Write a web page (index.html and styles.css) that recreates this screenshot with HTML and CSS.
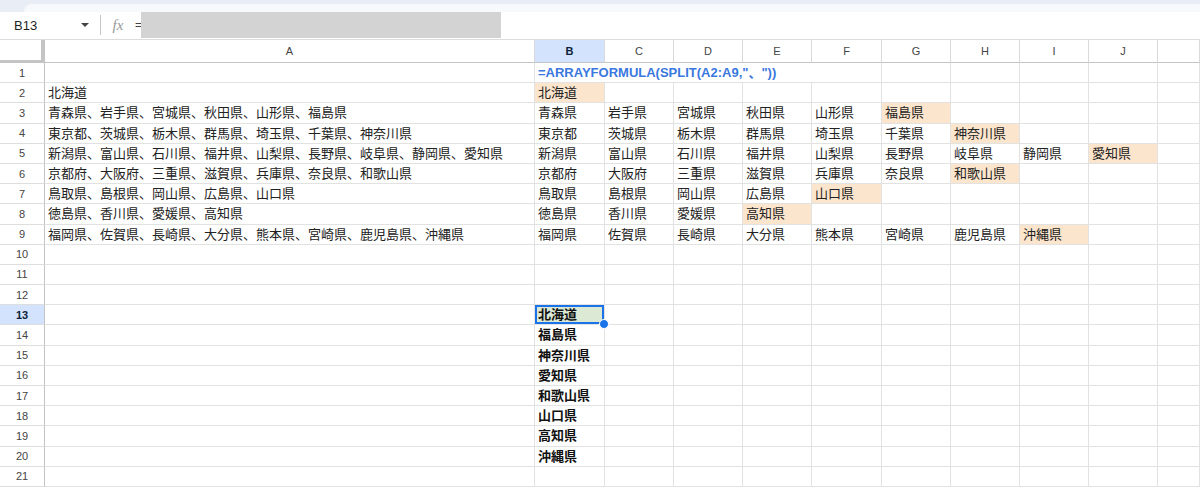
FILE: index.html
```html
<!DOCTYPE html>
<html lang="ja">
<head>
  <meta charset="UTF-8" />
  <meta name="viewport" content="width=device-width, initial-scale=1.0"/>
  <title>都道府県 SPLIT</title>
  <link rel="stylesheet" href="styles.css">
</head>
<body>
  <div class="topstrip"><div class="topstrip-inner"></div></div>

  <section class="formula-bar">
    <div class="name-box">
      <span class="cell-ref">B13</span>
      <svg class="caret" width="10" height="6" viewBox="0 0 10 6"><path d="M1 1 L5 5 L9 1 Z" fill="#444"/></svg>
    </div>
    <div class="divider"></div>
    <span class="fx">fx</span>
    <span class="eq">=</span>
    <div class="formula-input"></div>
  </section>

  <div class="sheet" id="sheet"></div>

  <script>
    const cols = ['A', 'B', 'C', 'D', 'E', 'F', 'G', 'H', 'I', 'J', ''];
    const source = [
      '',
      '北海道',
      '青森県、岩手県、宮城県、秋田県、山形県、福島県',
      '東京都、茨城県、栃木県、群馬県、埼玉県、千葉県、神奈川県',
      '新潟県、富山県、石川県、福井県、山梨県、長野県、岐阜県、静岡県、愛知県',
      '京都府、大阪府、三重県、滋賀県、兵庫県、奈良県、和歌山県',
      '鳥取県、島根県、岡山県、広島県、山口県',
      '徳島県、香川県、愛媛県、高知県',
      '福岡県、佐賀県、長崎県、大分県、熊本県、宮崎県、鹿児島県、沖縄県'
    ];
    const lastOnes = ['北海道', '福島県', '神奈川県', '愛知県', '和歌山県', '山口県', '高知県', '沖縄県'];

    const sheet = document.getElementById('sheet');

    function cell(cls, text) {
      const div = document.createElement('div');
      div.className = cls;
      if (text) div.textContent = text;
      sheet.appendChild(div);
      return div;
    }

    // column headers
    cell('corner');
    cols.forEach(c => cell(c === 'B' ? 'col-head active' : 'col-head', c));

    for (let r = 1; r <= 21; r++) {
      cell(r === 13 ? 'row-head active' : 'row-head', r);
      const text = source[r - 1] || '';
      cell('cell', text);

      if (r === 1) {
        const f = cell('cell formula', '=ARRAYFORMULA(SPLIT(A2:A9,"、"))');
        f.style.gridColumn = 'span 4';
        for (let i = 0; i < 6; i++) cell('cell');
        continue;
      }

      const parts = text ? text.split('、') : [];
      for (let c = 1; c < cols.length; c++) {
        let value = parts[c - 1] || '';
        let cls = 'cell';
        if (parts.length && c === parts.length) cls += ' hl';
        if (c === 1 && r >= 13 && r <= 20) {
          value = lastOnes[r - 13];
          cls += ' bold';
          if (r === 13) cls += ' selected';
        }
        cell(cls, value);
      }
    }
  </script>
</body>
</html>
```

FILE: styles.css
```css
* {
  margin: 0;
  padding: 0;
  box-sizing: border-box;
}

body {
  font-family: 'Liberation Sans', 'Noto Sans CJK JP', sans-serif;
  background: #fff;
  color: #222;
  width: 1200px;
  height: 488px;
  overflow: hidden;
}

.topstrip {
  height: 12px;
  background: #e9eef6;
  padding-top: 4px;
}

.topstrip-inner {
  height: 8px;
  margin-left: 24px;
  background: #f7f9fc;
  border-top-left-radius: 8px;
}

.formula-bar {
  height: 28px;
  display: flex;
  align-items: flex-start;
  border-bottom: 1px solid #dadce0;
}

.name-box {
  width: 100px;
  height: 26px;
  display: flex;
  align-items: center;
  justify-content: space-between;
  padding: 0 10px 0 14px;
  font-size: 13px;
  color: #1f1f1f;
}

.divider {
  width: 1px;
  height: 20px;
  margin-top: 3px;
  background: #c7c7c7;
}

.fx {
  width: 34px;
  height: 26px;
  line-height: 26px;
  text-align: center;
  font-family: 'Liberation Serif', serif;
  font-style: italic;
  font-size: 15px;
  color: #999;
}

.eq {
  height: 26px;
  line-height: 26px;
  font-size: 12px;
  color: #444;
  width: 6px;
}

.formula-input {
  width: 360px;
  height: 26px;
  background: #d3d3d3;
}

.sheet {
  display: grid;
  grid-template-columns: 45px 490px 70px 69px 69px 69px 70px 69px 69px 69px 69px 42px;
  grid-template-rows: 23px repeat(21, 20.2px);
}

.corner {
  border-right: 4px solid #c4c4c4;
  border-bottom: 3px solid #c4c4c4;
}

.col-head {
  display: flex;
  align-items: center;
  justify-content: center;
  font-size: 11px;
  color: #444;
  border-right: 1px solid #d9d9d9;
  border-bottom: 1px solid #c4c4c4;
}

.row-head {
  display: flex;
  align-items: center;
  justify-content: center;
  font-size: 11px;
  color: #444;
  border-right: 1px solid #c4c4c4;
  border-bottom: 1px solid #dedede;
}

.col-head.active,
.row-head.active {
  background: #d3e3fd;
  color: #0b1d3a;
  font-weight: bold;
}

.cell {
  font-size: 13px;
  line-height: 19px;
  padding-left: 3px;
  white-space: nowrap;
  overflow: visible;
  color: #222;
  border-right: 1px solid #e2e2e2;
  border-bottom: 1px solid #e2e2e2;
}

.cell.formula {
  color: #3a78e0;
  font-weight: bold;
  border-right: none;
}

.cell.hl {
  background: #fce5cd;
}

.cell.bold {
  font-weight: bold;
  color: #111;
}

.cell.selected {
  position: relative;
  background: #dbe9d5;
  box-shadow: inset 0 0 0 2px #1a73e8;
  z-index: 2;
}

.cell.selected::after {
  content: '';
  position: absolute;
  right: -5px;
  bottom: -5px;
  width: 8px;
  height: 8px;
  border-radius: 50%;
  background: #1a73e8;
  border: 1px solid #fff;
}
```
